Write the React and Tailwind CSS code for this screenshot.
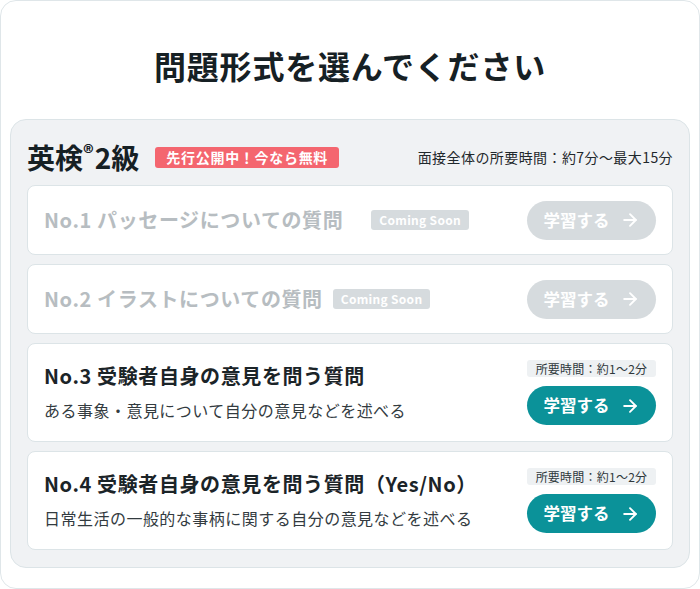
import React from 'react';
import { ArrowRight } from 'lucide-react';

const FONT = { fontFamily: '"Noto Sans CJK JP", "Noto Sans", sans-serif' };

const items = [
    { id: 1, title: 'No.1 パッセージについての質問', disabled: true, badgeGap: 'ml-7' },
    { id: 2, title: 'No.2 イラストについての質問', disabled: true, badgeGap: 'ml-2.5' },
    { id: 3, title: 'No.3 受験者自身の意見を問う質問', desc: 'ある事象・意見について自分の意見などを述べる', time: '所要時間：約1〜2分' },
    { id: 4, title: 'No.4 受験者自身の意見を問う質問（Yes/No）', desc: '日常生活の一般的な事柄に関する自分の意見などを述べる', time: '所要時間：約1〜2分' },
];

function StudyButton({ disabled }) {
    return (
        <button
            className={`w-[129px] h-[39px] rounded-full flex items-center justify-center gap-[10px] text-white text-[16.5px] font-bold ${disabled ? 'bg-[#d6dbde]' : 'bg-[#0b9299]'}`}
        >
            <span>学習する</span>
            <ArrowRight size={20} strokeWidth={2.25} />
        </button>
    );
}

function QuestionCard({ item }) {
    if (item.disabled) {
        return (
            <div className="h-[70px] bg-white border border-[#dce4e7] rounded-lg px-4 flex items-center justify-between">
                <div className="flex items-center">
                    <span className="text-[20px] font-bold tracking-[0.03em] text-[#b7bdc1]">{item.title}</span>
                    <span className={`${item.badgeGap} h-5 px-2 rounded-[3px] bg-[#d6dbde] text-white text-[12px] font-bold flex items-center tracking-wide`}>
                        Coming Soon
                    </span>
                </div>
                <StudyButton disabled />
            </div>
        );
    }
    return (
        <div className="bg-white border border-[#dce4e7] rounded-lg px-4 py-4 flex items-center justify-between">
            <div className="flex flex-col gap-[10px]">
                <span className="text-[20px] font-bold tracking-[0.03em] text-[#1b2428] leading-6">{item.title}</span>
                <span className="text-[16px] tracking-[0.03em] text-[#333b3f] leading-6">{item.desc}</span>
            </div>
            <div className="flex flex-col gap-[9px] w-[129px]">
                <span className="h-[17px] rounded-[3px] bg-[#eef1f3] text-[12px] text-[#2f383c] flex items-center justify-center tracking-[0.02em]">
                    {item.time}
                </span>
                <StudyButton />
            </div>
        </div>
    );
}

export default function App() {
    return (
        <div className="w-[700px] h-[589px] bg-white" style={FONT}>
            <div className="h-full border border-[#dfe6e9] rounded-2xl bg-white flex flex-col">
                {/* Title */}
                <div className="pt-[40px] pb-[30px] flex justify-center">
                    <h1 className="text-[32px] leading-[48px] font-bold tracking-[0.025em] text-[#162024]">問題形式を選んでください</h1>
                </div>

                {/* Panel */}
                <div className="mx-[9px] mb-[20px] flex-1 bg-[#f0f2f4] border border-[#dce4e7] rounded-2xl px-4 pt-5 pb-4 flex flex-col">
                    <div className="h-[34px] mb-[11px] flex items-center justify-between">
                        <div className="flex items-center">
                            <span className="text-[28px] font-bold text-[#162024] leading-none flex items-start">
                                英検<span className="text-[21px] leading-none -mt-[1px] mr-[1px]">®</span>2級
                            </span>
                            <span className="ml-4 h-[21px] px-[11px] rounded-[3px] bg-[#f4666f] text-white text-[14px] font-bold flex items-center tracking-[0.05em]">
                                先行公開中！今なら無料
                            </span>
                        </div>
                        <span className="text-[14px] tracking-[0.03em] text-[#1f282c]">面接全体の所要時間：約7分〜最大15分</span>
                    </div>

                    <div className="flex flex-col gap-[9px]">
                        {items.map(item => (
                            <QuestionCard key={item.id} item={item} />
                        ))}
                    </div>
                </div>
            </div>
        </div>
    );
}
